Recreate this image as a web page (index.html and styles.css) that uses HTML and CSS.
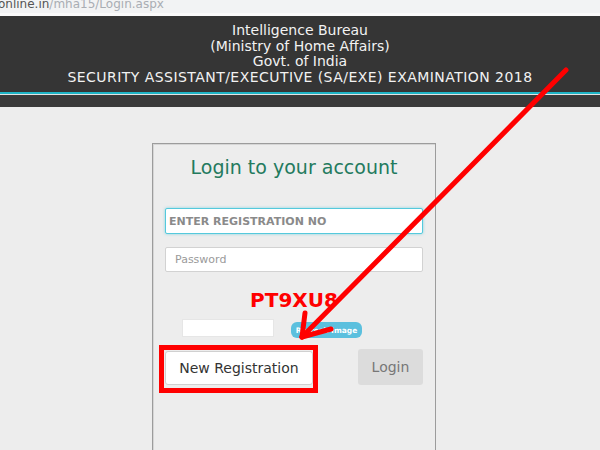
FILE: index.html
```html
<!DOCTYPE html>
<html lang="en">
<head>
    <meta charset="UTF-8">
    <meta name="viewport" content="width=device-width, initial-scale=1.0">
    <title>Login</title>
    <link rel="stylesheet" href="styles.css">
</head>
<body>
    <div class="urlbar"><span class="host">online.in</span>/mha15/Login.aspx</div>

    <header class="banner">
        <div>Intelligence Bureau</div>
        <div>(Ministry of Home Affairs)</div>
        <div>Govt. of India</div>
        <div class="exam">SECURITY ASSISTANT/EXECUTIVE (SA/EXE) EXAMINATION 2018</div>
    </header>
    <div class="band"></div>

    <main class="page">
        <div class="login-box">
            <h2 class="title">Login to your account</h2>
            <input class="field focused" type="text" placeholder="ENTER REGISTRATION NO">
            <input class="field" type="password" placeholder="Password">
            <div class="captcha-text">PT9XU8</div>
            <div class="captcha-row">
                <input class="captcha-input" type="text">
                <button class="refresh">Refresh Image</button>
            </div>
            <div class="actions">
                <div class="mark">
                    <button class="btn-register">New Registration</button>
                </div>
                <button class="btn-login">Login</button>
            </div>
        </div>
    </main>

    <svg class="arrow" width="600" height="450" viewBox="0 0 600 450">
        <g stroke="#ff0000" stroke-width="5" stroke-linecap="round" fill="none">
            <line x1="566" y1="70" x2="302" y2="337"></line>
            <line x1="302" y1="337" x2="305" y2="313"></line>
            <line x1="302" y1="337" x2="331" y2="329"></line>
        </g>
    </svg>
</body>
</html>
```

FILE: styles.css
```css
body {
    margin: 0;
    height: 450px;
    overflow: hidden;
    background: #ededed;
    font-family: "DejaVu Sans", Verdana, sans-serif;
    position: relative;
}

.urlbar {
    height: 13px;
    border-bottom: 3px solid #fafafa;
    background: #f2f3f4;
    color: #a9adb3;
    font-size: 12px;
    line-height: 9px;
    overflow: hidden;
    white-space: nowrap;
}

.urlbar .host {
    color: #555;
    margin-left: -2px;
}

.banner {
    background: #353535;
    color: #f2f2f2;
    text-align: center;
    font-size: 14px;
    line-height: 15.5px;
    padding: 7px 0 7px;
    border-bottom: 2px solid #1fb4c6;
    height: 62px;
}

.banner .exam {
    letter-spacing: 0.45px;
}

.band {
    height: 12px;
    background: #3a3a3a;
    border-top: 1px solid #e4e4e4;
}

.page {
    padding: 36px 0 0 152px;
}

.login-box {
    width: 258px;
    min-height: 400px;
    padding: 0 12px;
    border: 1px solid #9c9c9c;
    box-shadow: inset 1px 1px 0 #d6d6d6;
}

.title {
    margin: 11px 0 0;
    text-align: center;
    font-size: 19px;
    line-height: 24px;
    font-weight: normal;
    color: #237a5e;
}

.field {
    display: block;
    box-sizing: border-box;
    width: 100%;
    height: 25px;
    margin-top: 13px;
    padding: 0 9px;
    border: 1px solid #d2d2d2;
    border-radius: 2px;
    background: #fff;
    font-family: inherit;
    font-size: 11px;
}

.field::placeholder {
    color: #9a9a9a;
}

.field.focused {
    height: 26px;
    margin-top: 29px;
    padding-left: 3px;
    border-color: #55c9dc;
    box-shadow: 0 0 3px rgba(85, 201, 220, 0.7);
}

.field.focused::placeholder {
    color: #8a8a8a;
    font-weight: bold;
}

.captcha-text {
    margin-top: 16px;
    text-align: center;
    font-size: 20px;
    line-height: 24px;
    font-weight: bold;
    color: #ff0000;
}

.captcha-row {
    display: flex;
    align-items: flex-start;
    gap: 17px;
    margin-top: 7px;
    padding-left: 17px;
}

.captcha-input {
    box-sizing: border-box;
    width: 92px;
    height: 18px;
    border: 1px solid #e6e6e6;
    background: #fff;
}

.refresh {
    margin-top: 3px;
    width: 71px;
    height: 16px;
    padding: 0;
    border: none;
    border-radius: 6px;
    background: #5bc0de;
    color: #fff;
    font-family: inherit;
    font-size: 7.5px;
    font-weight: bold;
}

.actions {
    display: flex;
    justify-content: space-between;
    align-items: flex-start;
    margin-top: 7px;
}

.mark {
    margin-left: -6px;
    padding: 1px 0 3px 1px;
    border: 5px solid #ff0000;
}

.btn-register {
    display: block;
    width: 148px;
    height: 34px;
    border: 1px solid #d0d0d0;
    border-radius: 3px;
    background: #fff;
    color: #333;
    font-family: inherit;
    font-size: 14px;
}

.btn-login {
    margin-top: 4px;
    width: 65px;
    height: 36px;
    border: none;
    border-radius: 3px;
    background: #dcdcdc;
    color: #777;
    font-family: inherit;
    font-size: 14px;
}

.arrow {
    position: absolute;
    left: 0;
    top: 0;
}
```
